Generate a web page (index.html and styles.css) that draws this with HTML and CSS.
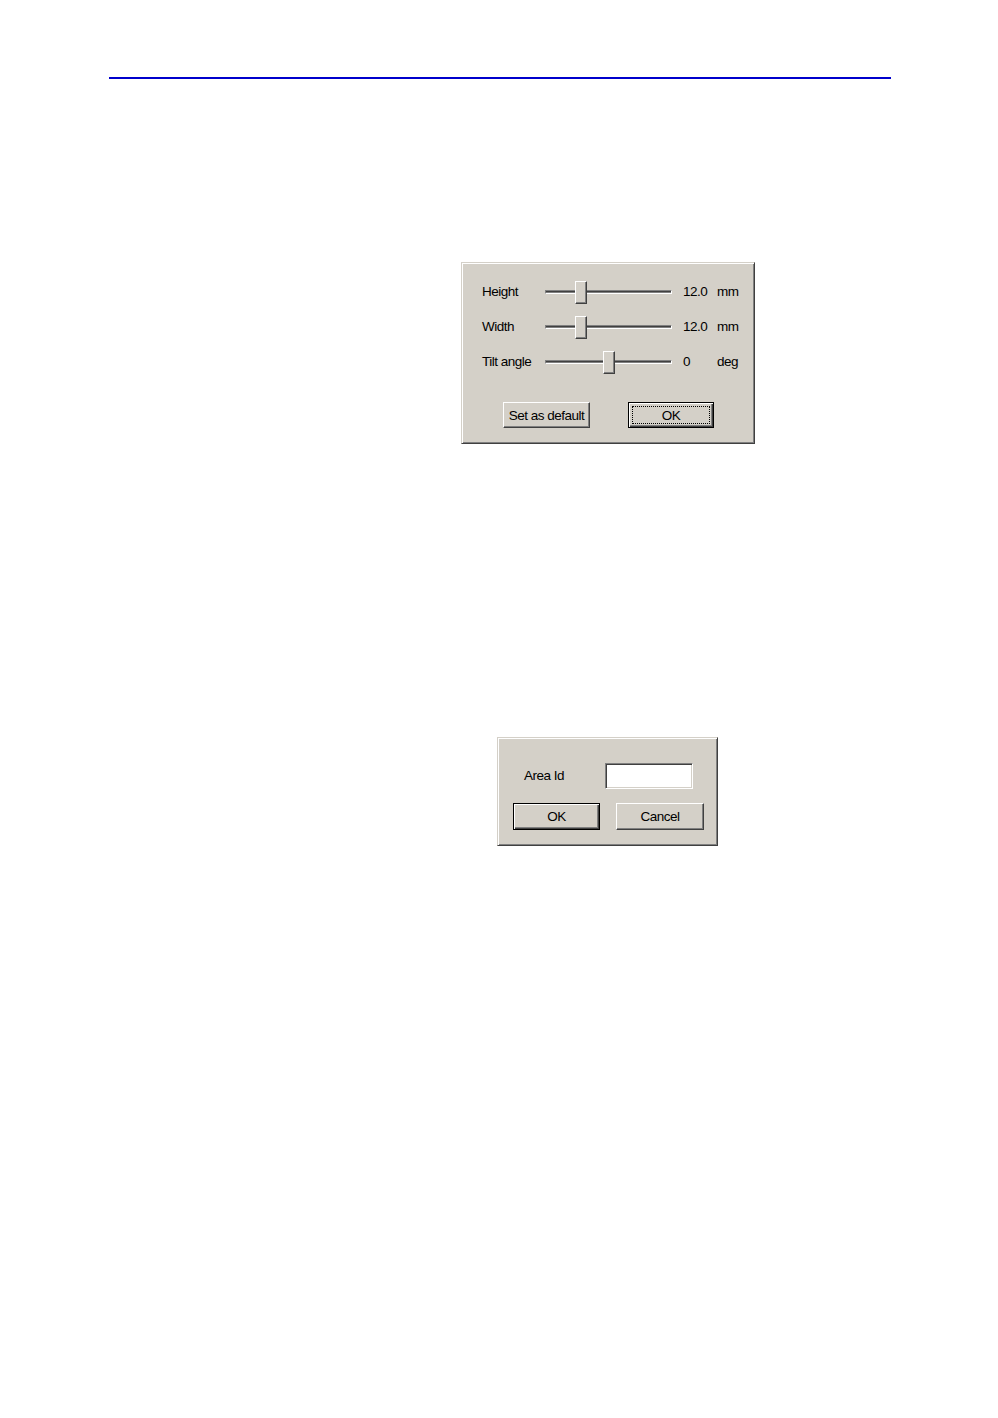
FILE: index.html
```html
<!DOCTYPE html>
<html>
<head>
<meta charset="utf-8">
<link rel="stylesheet" href="styles.css">
</head>
<body>
<div class="page">
  <div class="rule"></div>

  <div class="dialog dlg-size">
    <div class="rows">
      <div class="row">
        <span class="label">Height</span>
        <div class="slider"><div class="track"></div><div class="thumb" style="left:30px"></div></div>
        <span class="value">12.0</span>
        <span class="unit">mm</span>
      </div>
      <div class="row">
        <span class="label">Width</span>
        <div class="slider"><div class="track"></div><div class="thumb" style="left:30px"></div></div>
        <span class="value">12.0</span>
        <span class="unit">mm</span>
      </div>
      <div class="row">
        <span class="label">Tilt angle</span>
        <div class="slider"><div class="track"></div><div class="thumb" style="left:58px"></div></div>
        <span class="value">0</span>
        <span class="unit">deg</span>
      </div>
    </div>
    <div class="buttons buttons-size">
      <div class="btn btn-default-set">Set as default</div>
      <div class="btn btn-primary btn-ok1"><span class="focus">OK</span></div>
    </div>
  </div>

  <div class="dialog dlg-area">
    <div class="area-row">
      <span class="area-label">Area Id</span>
      <div class="input"></div>
    </div>
    <div class="buttons buttons-area">
      <div class="btn btn-primary btn-ok2">OK</div>
      <div class="btn btn-cancel">Cancel</div>
    </div>
  </div>
</div>
</body>
</html>
```

FILE: styles.css
```css
html, body {
  margin: 0;
  padding: 0;
  background: #ffffff;
}

.page {
  width: 998px;
  min-height: 1418px;
  padding-top: 77px;
  box-sizing: border-box;
  font-family: "Liberation Sans", Arial, sans-serif;
  font-size: 13.5px;
  letter-spacing: -0.5px;
  color: #000;
}

.rule {
  margin-left: 109px;
  width: 782px;
  height: 2px;
  background: #0000cc;
}

.dialog {
  box-sizing: border-box;
  background: #d4d0c8;
  border: 1px solid;
  border-color: #d4d0c8 #404040 #404040 #d4d0c8;
  box-shadow: inset 1px 1px 0 #ffffff, inset -1px -1px 0 #808080;
}

.dlg-size {
  margin-top: 183px;
  margin-left: 461px;
  width: 294px;
  height: 182px;
  padding: 11px 0 0 20px;
}

.rows {
  display: flex;
  flex-direction: column;
}

.row {
  display: grid;
  grid-template-columns: 63px 127px 34px auto;
  align-items: center;
  height: 35px;
}

.row .value {
  margin-left: 11px;
}

.row .unit {
  margin-left: 11px;
}

.slider {
  position: relative;
  height: 24px;
}

.track {
  position: absolute;
  left: 0;
  right: 0;
  top: 10px;
  height: 4px;
  box-sizing: border-box;
  border-top: 1px solid #808080;
  border-left: 1px solid #808080;
  border-bottom: 1px solid #ffffff;
  border-right: 1px solid #ffffff;
  background: #404040;
  background-clip: padding-box;
}

.track::after {
  content: "";
  position: absolute;
  left: 0;
  right: 0;
  bottom: 0;
  height: 1px;
  background: #808080;
}

.thumb {
  position: absolute;
  top: 1px;
  width: 12px;
  height: 23px;
  box-sizing: border-box;
  background: #d4d0c8;
  border: 1px solid;
  border-color: #ffffff #404040 #404040 #ffffff;
  box-shadow: inset -1px -1px 0 #808080;
}

.buttons {
  display: flex;
}

.buttons-size {
  margin-top: 23px;
  margin-left: 21px;
  gap: 38px;
}

.btn {
  box-sizing: border-box;
  display: flex;
  align-items: center;
  justify-content: center;
  background: #d4d0c8;
  border: 1px solid;
  border-color: #ffffff #404040 #404040 #ffffff;
  box-shadow: inset -1px -1px 0 #808080;
  height: 26px;
}

.btn-default-set {
  width: 87px;
}

.btn-primary {
  border: 1px solid #000000;
  box-shadow: inset 1px 1px 0 #ffffff, inset -1px -1px 0 #404040, inset -2px -2px 0 #808080;
}

.btn-ok1 {
  width: 86px;
  padding: 3px;
}

.focus {
  flex: 1;
  align-self: stretch;
  display: flex;
  align-items: center;
  justify-content: center;
  border: 1px dotted #000;
}

.dlg-area {
  margin-top: 293px;
  margin-left: 497px;
  width: 221px;
  height: 109px;
  padding: 24px 0 0 15px;
}

.area-row {
  display: flex;
  align-items: center;
  height: 27px;
}

.area-label {
  margin-left: 11px;
  width: 81px;
}

.input {
  width: 88px;
  height: 26px;
  box-sizing: border-box;
  background: #ffffff;
  border: 1px solid;
  border-color: #808080 #ffffff #ffffff #808080;
  box-shadow: inset 1px 1px 0 #404040, inset -1px -1px 0 #d4d0c8;
}

.buttons-area {
  margin-top: 14px;
  gap: 16px;
}

.btn-ok2 {
  width: 87px;
  height: 27px;
}

.btn-cancel {
  width: 88px;
  height: 27px;
}
```
